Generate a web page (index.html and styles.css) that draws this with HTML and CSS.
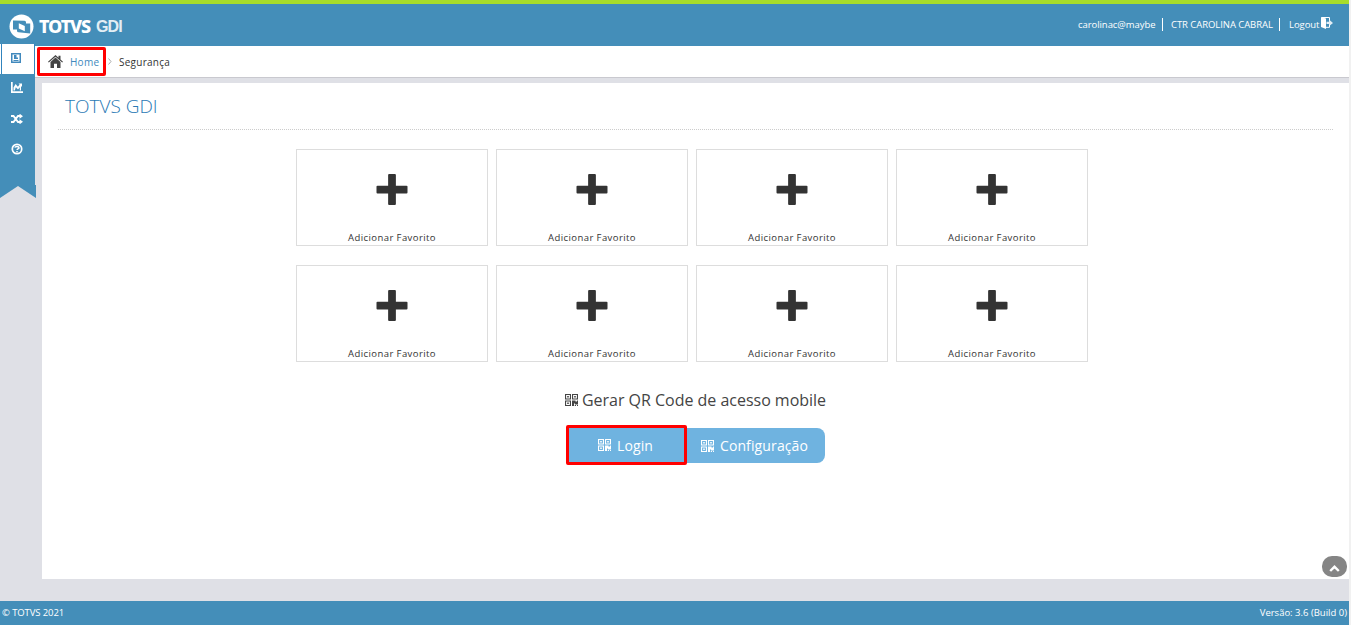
FILE: index.html
```
<!DOCTYPE html>
<html lang="pt-br">
<head>
    <meta charset="UTF-8">
    <meta name="viewport" content="width=device-width, initial-scale=1.0">
    <title>TOTVS GDI</title>
    <link rel="stylesheet" href="styles.css">
</head>
<body>
    <svg class="symbols">
        <symbol id="plus" viewBox="0 0 32 32">
            <path d="M13 0h6q1 0 1 1v11h11q1 0 1 1v6q0 1-1 1H20v11q0 1-1 1h-6q-1 0-1-1V20H1q-1 0-1-1v-6q0-1 1-1h11V1q0-1 1-1z"/>
        </symbol>
        <symbol id="qrcode" viewBox="0 0 13 12">
            <path fill-rule="evenodd" d="M0 0h6v5.500H0zM1.100 1v3.500h3.800V1zM7 0h6v5.500H7zM8.100 1v3.500h3.800V1zM0 6.500h6V12H0zM1.100 7.500V11h3.800V7.500zM2.200 2h1.600v1.500H2.200zM9.200 2h1.600v1.500H9.200zM2.200 8.500h1.600V10H2.200zM7 6.500h3.500v1H12v-1h1v4h-3V9.500H9V12H7zM9.800 11h1.200v1H9.800zM12 11h1v1h-1z"/>
        </symbol>
    </svg>

    <div class="page">
        <header class="header">
            <div class="logo">
                <svg class="logo-mark" width="25" height="25" viewBox="0 0 25 25">
                    <circle cx="12.500" cy="12.500" r="12" fill="#fff"/>
                    <path fill="#448eb9" fill-rule="evenodd" d="M4 6.500l11.500.2q1.500.1 1.500 1.600v1.200h4.200v10L9.500 18.300q-1.500-.1-1.500-1.600v-1.200H4zM9.800 9.300v5.200l6 2.800v-5.200z"/>
                </svg>
                <span class="logo-totvs">TOTVS</span>
                <span class="logo-gdi">GDI</span>
            </div>
            <ul class="user">
                <li class="user-login">carolinac@maybe</li>
                <li class="user-name">CTR CAROLINA CABRAL</li>
                <li class="user-logout">Logout
                    <svg width="12" height="12" viewBox="0 0 12 12" fill="#fff">
                        <path d="M0 0l5 1.500V12L0 10z"/>
                        <path d="M1 .5h7.500v3M8.500 8v2.300H5" fill="none" stroke="#fff"/>
                        <path d="M5.500 4.700H8V2.500l4 3.400-4 3.400V7.100H5.500z" opacity=".85"/>
                    </svg>
                </li>
            </ul>
        </header>

        <div class="main">
            <nav class="sidebar">
                <a class="side-item active">
                    <svg width="10" height="10" viewBox="0 0 10 10">
                        <path d="M.75.75h8.500v8.500H.75z" fill="none" stroke="#4189bd" stroke-width="1.500"/>
                        <path d="M3 2h2.500v2.500H7V6H3zM2.500 7h5v1h-5z" fill="#4189bd"/>
                    </svg>
                </a>
                <a class="side-item side-chart">
                    <svg width="12" height="11" viewBox="0 0 12 11">
                        <path d="M0 0h1.700v9.200H12V11H0z" fill="#fff"/>
                        <path d="M2.500 8.500V5.500L4.600 2l2.300 2.800L8.600 2.500 7.500 1.400H11v3.500l-1-1L10 8.500H8.800V5.200L7 7.600 4.800 5.200 3.800 8.500z" fill="#fff"/>
                    </svg>
                </a>
                <a class="side-item">
                    <svg width="12" height="10" viewBox="0 0 12 10">
                        <path d="M0 2h2.500l4.500 6h2M0 8h2.500L7 2h2" fill="none" stroke="#fff" stroke-width="1.900"/>
                        <path d="M8.500-.4L12 2.200 8.500 4.800zM8.500 5.200L12 7.800l-3.500 2.600z" fill="#fff"/>
                    </svg>
                </a>
                <a class="side-item">
                    <svg width="12" height="12" viewBox="0 0 12 12" fill="none" stroke="#fff">
                        <circle cx="6" cy="6" r="4.700" stroke-width="1.700"/>
                        <path d="M3.800 4.600q.4-1.100 2.200-1.100 2 0 2 1.200 0 .8-1.100 1.200-.8.300-.8 1M6 7.900v1.400" stroke-width="1.500"/>
                    </svg>
                </a>
                <svg class="ribbon" width="36" height="13" viewBox="0 0 36 13">
                    <path d="M0 0h36v13L18 1 0 13z" fill="#448eb9"/>
                </svg>
            </nav>

            <div class="content">
                <div class="breadcrumb">
                    <span class="crumb-home">
                        <svg width="15" height="13" viewBox="0 0 15 13" fill="#444">
                            <path d="M7.500 0l3 2.700V.8h2v3.700L15 6.700l-.8.9-6.700-5.900L.8 7.600 0 6.700z"/>
                            <path d="M7.500 2.500l5 4.400V13H9V8.800H6V13H2.500V6.900z"/>
                        </svg>
                        Home
                    </span>
                    <svg class="crumb-arrow" width="4" height="7" viewBox="0 0 4 7">
                        <path d="M.5.500l2.500 3-2.500 3" fill="none" stroke="#aaa"/>
                    </svg>
                    <span class="crumb-page">Segurança</span>
                </div>

                <div class="panel">
                    <h1><span>TOTVS GDI</span></h1>
                    <div class="favorites">
                        <div class="favorite"><svg><use href="#plus"/></svg><p>Adicionar Favorito</p></div>
                        <div class="favorite"><svg><use href="#plus"/></svg><p>Adicionar Favorito</p></div>
                        <div class="favorite"><svg><use href="#plus"/></svg><p>Adicionar Favorito</p></div>
                        <div class="favorite"><svg><use href="#plus"/></svg><p>Adicionar Favorito</p></div>
                        <div class="favorite"><svg><use href="#plus"/></svg><p>Adicionar Favorito</p></div>
                        <div class="favorite"><svg><use href="#plus"/></svg><p>Adicionar Favorito</p></div>
                        <div class="favorite"><svg><use href="#plus"/></svg><p>Adicionar Favorito</p></div>
                        <div class="favorite"><svg><use href="#plus"/></svg><p>Adicionar Favorito</p></div>
                    </div>
                    <h2><svg class="qr"><use href="#qrcode"/></svg><span>Gerar QR Code de acesso mobile</span></h2>
                    <div class="buttons">
                        <button class="btn-login"><svg class="qr"><use href="#qrcode"/></svg><span>Login</span></button>
                        <button class="btn-config"><svg class="qr"><use href="#qrcode"/></svg><span>Configuração</span></button>
                    </div>
                </div>
            </div>
        </div>

        <footer class="footer">
            <span class="copyright">© TOTVS 2021</span>
            <span class="version">Versão: 3.6 (Build 0)</span>
        </footer>

        <a class="to-top">
            <svg width="11" height="7" viewBox="0 0 11 7">
                <path d="M1.200 6l4.300-4.200L9.800 6" fill="none" stroke="#fff" stroke-width="2.400"/>
            </svg>
        </a>
    </div>
</body>
</html>
```
FILE: styles.css
```
*{box-sizing: border-box;}

body{margin: 0; background: #f1f1f1; font-family: "Open Sans", sans-serif; font-size: 10px; color: #333; overflow: hidden;}

h1, h2, p, ul{margin: 0; padding: 0; font-weight: normal;}

svg{display: block; flex: none;}

.symbols{position: absolute; width: 0; height: 0;}

.page{position: relative; width: 1349px; height: 625px; background: #dfe0e6; display: flex; flex-direction: column;}

/* header */
.header{height: 46px; border-top: 4px solid #a7dc2b; background: #448eb9; color: #fff; display: flex; justify-content: space-between; flex: none;}

.logo{display: flex; align-items: center; height: 44px; padding-left: 9px; white-space: nowrap;}
.logo-totvs{font-family: "Noto Sans", sans-serif; font-weight: 800; font-size: 18px; line-height: 20px; width: 52px; margin-left: 5px; letter-spacing: -1.1px;}
.logo-gdi{font-family: "Liberation Sans", sans-serif; font-weight: bold; font-size: 16px; line-height: 20px; margin: 2px 0 0 5px; letter-spacing: -0.9px; opacity: .85;}

.user{list-style: none; display: flex; align-items: center; height: 13px; margin-top: 14px; font-size: 9.5px; line-height: 13px; letter-spacing: -0.06px; white-space: nowrap;}
.user-login{width: 85px; border-right: 1px solid #fff;}
.user-name{width: 117px; padding-left: 8px; border-right: 1px solid #fff;}
.user-logout{width: 69px; padding-left: 9px; display: flex; gap: 2px;}
.user-logout svg{margin-top: -1px;}

/* sidebar */
.main{display: flex; height: 555px; flex: none;}

.sidebar{width: 35px; height: 139px; background: #448eb9; flex: none; display: flex; flex-direction: column;}
.side-item{width: 35px; height: 30px; padding-right: 2px; display: flex; align-items: center; justify-content: center; flex: none;}
.side-item.active{width: 34px; height: 30px; margin: -2px 0 0 1px; padding: 0 4px 2px 0; background: #fff; border: solid #3184bd; border-width: 0 1px; box-shadow: -1px 0 #fff;}
.side-chart{padding-bottom: 3px;}
.ribbon{margin-top: 21px;}

.content{width: 1314px;}

/* breadcrumb */
.breadcrumb{height: 32px; background: #fff; border-bottom: 1px solid #c9c9cf; padding-left: 2px; display: flex; align-items: center; font-size: 10px; letter-spacing: 0.25px;}
.crumb-home{width: 69px; height: 29px; border: 3px solid #f00; border-radius: 2px; padding-left: 8px; display: flex; align-items: center; gap: 7px; color: #4189bd; white-space: nowrap;}
.crumb-arrow{margin-left: 2px;}
.crumb-page{margin-left: 7px;}

/* panel */
.panel{margin: 5px 0 0 7px; height: 496px; background: #fff; padding: 0 16px;}

h1{height: 47px; border-bottom: 1px dotted #ccc; padding-left: 7px; font-size: 19px; line-height: 46px; font-weight: 300; color: #2a7ab5;}

.favorites{margin: 19px 0 0 238px; display: grid; grid-template-columns: repeat(4, 192px); gap: 19px 8px;}
.favorite{height: 97px; border: 1px solid #ddd; padding-top: 24px; text-align: center;}
.favorite svg{width: 32px; height: 31px; margin: 0 auto; fill: #333;}
.favorite p{margin-top: 26px; line-height: 14px; font-size: 9.5px; letter-spacing: 0.42px;}

.qr{width: 13px; height: 12px; fill: currentColor;}

h2{display: flex; align-items: center; gap: 4px; margin: 26px 0 0 507px; height: 24px; font-size: 16px; letter-spacing: -0.02px; white-space: nowrap; color: #444;}

.buttons{display: flex; margin: 13px 0 0 508px;}
button{height: 35px; margin-top: 3px; border: 0; padding: 0 3px 0 0; display: flex; align-items: center; justify-content: center; gap: 6px; background: #6fb3e0; color: #fff; font-family: inherit; font-size: 14px; letter-spacing: 0.12px;}
.btn-login{width: 121px; height: 40px; margin-top: 0; padding-right: 2px; border: 3px solid #f00; border-radius: 2px;}
.btn-config{width: 138px; border-radius: 0 8px 8px 0;}

/* footer */
.footer{height: 24px; padding: 0 2px 1px; background: #448eb9; color: #fff; display: flex; align-items: center; justify-content: space-between; font-size: 9.5px; font-weight: 500;}
.copyright{letter-spacing: -0.1px;}

.to-top{position: absolute; right: 2px; top: 556px; width: 25px; height: 21px; border-radius: 10px; background: #858585; display: flex; align-items: center; justify-content: center; padding-top: 4px;}
```
